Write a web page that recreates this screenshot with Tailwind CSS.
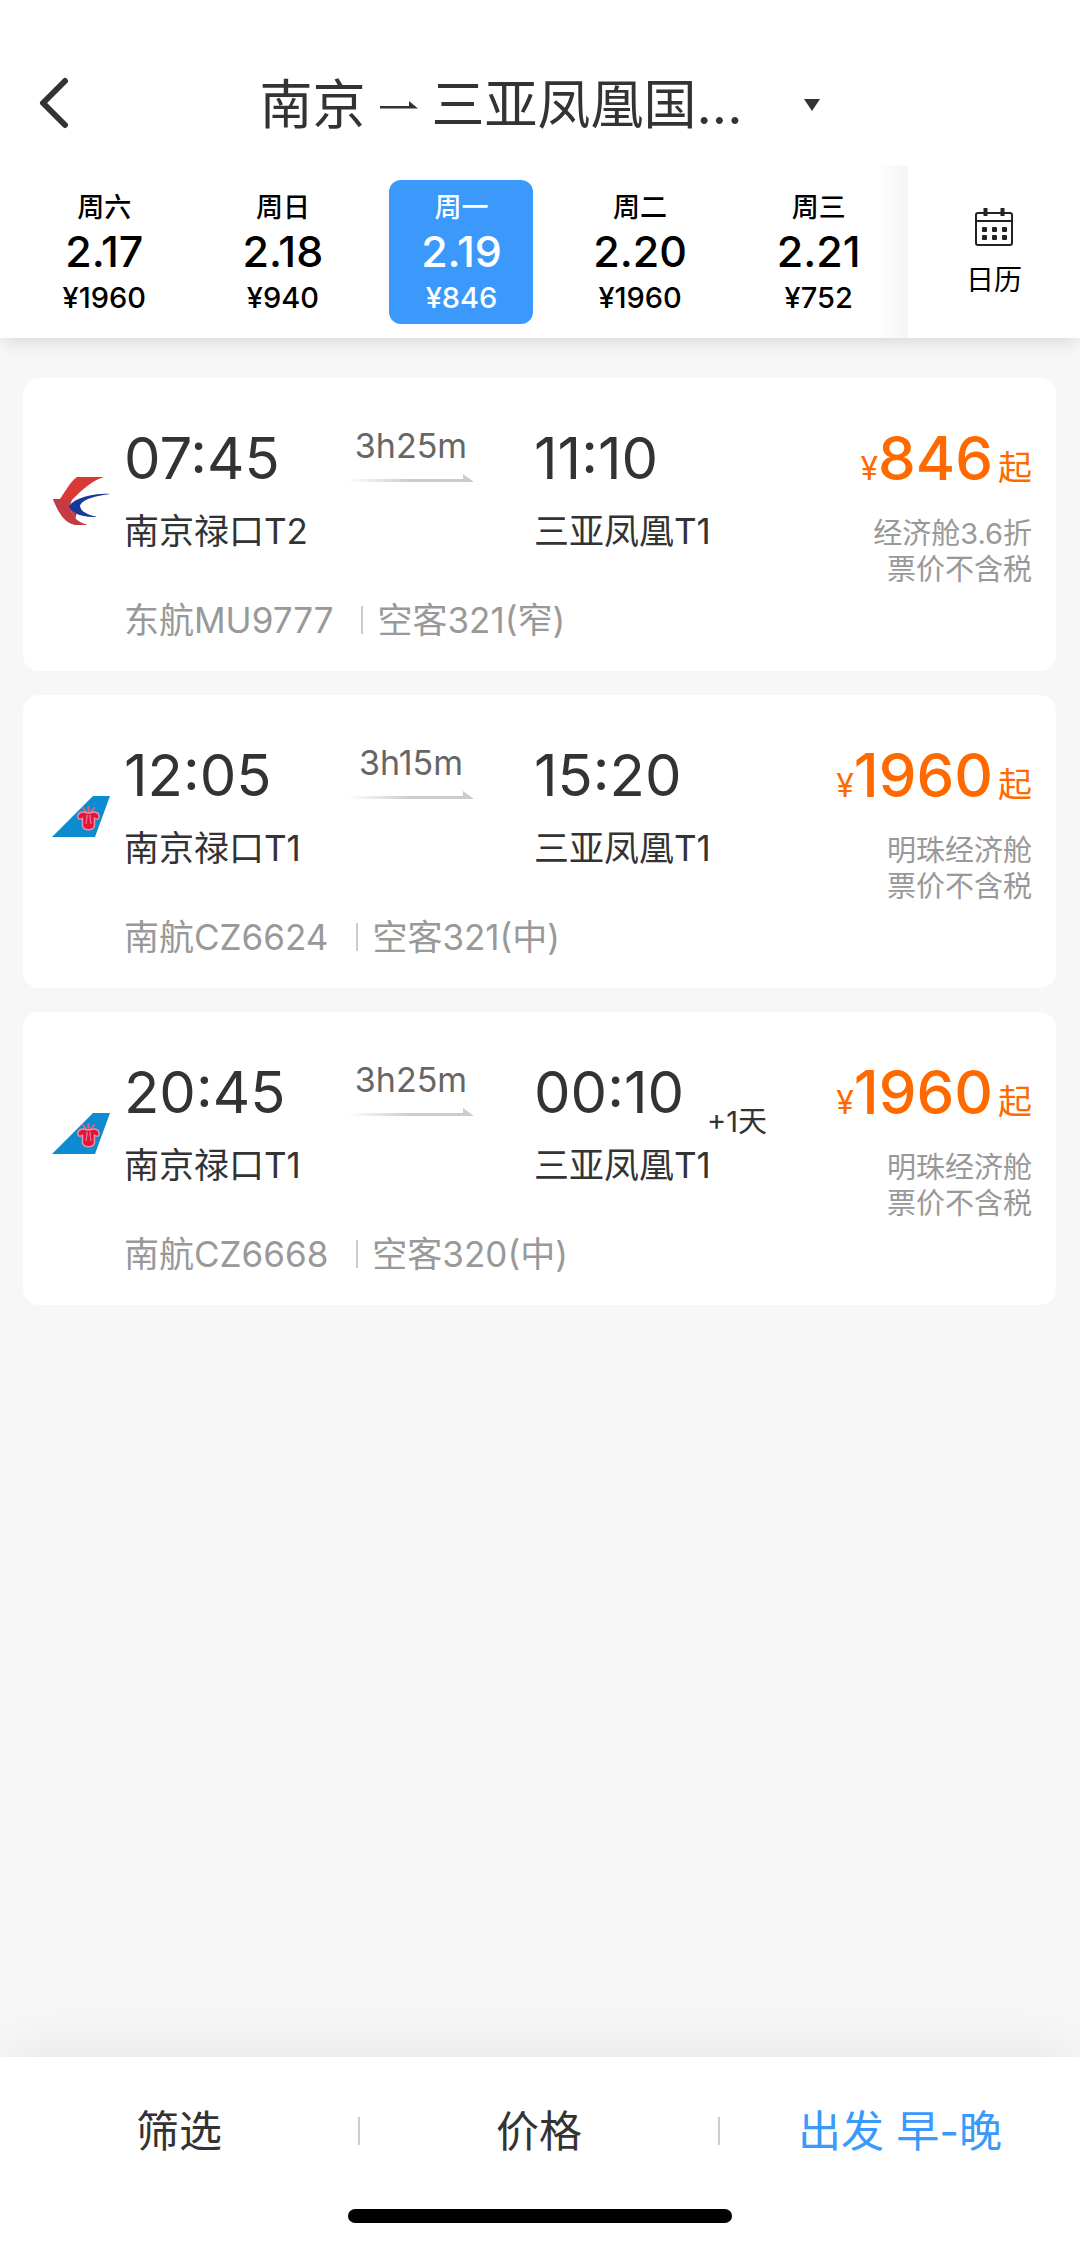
<!DOCTYPE html>
<html lang="zh-CN">
<head>
<meta charset="utf-8">
<meta name="viewport" content="width=device-width, initial-scale=1">
<title>南京 - 三亚 航班</title>
<script src="https://cdn.jsdelivr.net/npm/@tailwindcss/browser@4"></script>
</head>
<body class="bg-[#f7f7f7] font-['Inter','Noto_Sans_CJK_SC',sans-serif] text-[#333]">
<svg class="absolute h-0 w-0" aria-hidden="true">
  <defs>
    <linearGradient id="fade"><stop offset="0" stop-color="#ccc" stop-opacity="0"/><stop offset=".5" stop-color="#ccc"/></linearGradient>
  </defs>
  <symbol id="china-eastern" viewBox="0 0 60 60">
    <path d="M26 7H53C40 11 32 19 21 30L18 37C20 45 24 51 36 55H29C15 56 8 44 2 29H9C14 22 19 12 26 7Z" fill="#d93a35"/>
    <path d="M9 29L20 30 19 36C21 47 26 52 36 55H29C15 56 8 44 2 29Z" fill="#c43b45"/>
    <path d="M18 36L26 30V42L24 50Z" fill="#c43b45"/>
    <path d="M59 24C45 23 25 27 18 36C19 42 30 47 46 47C36 45 29 41 29 36C31 29 45 26 59 24Z" fill="#18399c"/>
    <path d="M46 47C36 45 29 41 29 36C28 40 27 43 24 43C30 46 37 47 46 47Z" fill="#18399c"/>
  </symbol>
  <symbol id="china-southern" viewBox="0 0 60 60">
    <path d="M42 9H59L44 50H1Z" fill="#0d8bd0"/>
    <path d="M32 21L35 25M37.500 20V25M43 21L40 25" fill="none" stroke="#e5607c" stroke-width="2" stroke-linecap="round"/>
    <path d="M27 31C26 25 32 24 36 26H39C43 24 49 25 48 31C47 33 44 32 43.500 31V39C42 44 33 44 31.500 39V31C31 32 28 33 27 31Z" fill="#e2143a" stroke="#ef8fa6" stroke-width="1.500" stroke-linejoin="round"/>
    <path d="M36 28C36 33 35 35 35 37M39 28C39 33 40 35 40 37" fill="none" stroke="#f29bb0" stroke-width="1"/>
  </symbol>
  <symbol id="flight-arrow" viewBox="0 0 128 8">
    <path d="M0 5H116V0L127 8H0Z" fill="url(#fade)"/>
  </symbol>
</svg>

<div class="flex min-h-screen flex-col">
  <header class="relative z-10 bg-white pt-[60px] shadow-[0_6px_18px_-3px_rgba(0,0,0,0.14)]">
    <div class="grid h-[86px] grid-cols-[96px_1fr_96px] items-center">
      <button type="button" aria-label="返回" class="flex h-full items-center pl-[38px]">
        <svg class="h-[52px] w-8" viewBox="0 0 32 52" fill="none" stroke="#333" stroke-width="6" stroke-linecap="round" stroke-linejoin="round"><path d="M27 4L5 26L27 48"/></svg>
      </button>
      <button type="button" class="flex items-center justify-center pt-1 text-[53px] leading-[80px]">
        <span>南京</span>
        <svg class="mx-[14px] h-2 w-[38px]" viewBox="0 0 38 8" aria-hidden="true"><path d="M0 5H29V0L38 7.500H0Z" fill="#333"/></svg>
        <span>三亚凤凰国...</span>
        <svg class="ml-[62px] h-3 w-4" viewBox="0 0 16 12" aria-hidden="true"><path d="M0 0H16L8 12Z" fill="#333"/></svg>
      </button>
    </div>
    <div class="flex pt-[19px] text-black">
      <nav aria-label="日期" class="grid flex-1 grid-cols-5 justify-items-center pt-[15px] pb-[14px] pl-[15px] font-medium">
        <button type="button" class="flex h-36 w-36 flex-col items-center rounded-xl pt-3">
          <span class="text-[27px] leading-8">周六</span><span class="text-[43px] leading-[54px]">2.17</span><span class="text-[29px] leading-10">¥1960</span>
        </button>
        <button type="button" class="flex h-36 w-36 flex-col items-center rounded-xl pt-3">
          <span class="text-[27px] leading-8">周日</span><span class="text-[43px] leading-[54px]">2.18</span><span class="text-[29px] leading-10">¥940</span>
        </button>
        <button type="button" aria-pressed="true" class="flex h-36 w-36 flex-col items-center rounded-xl bg-[#3b99fc] pt-3 text-white">
          <span class="text-[27px] leading-8">周一</span><span class="text-[43px] leading-[54px]">2.19</span><span class="text-[29px] leading-10">¥846</span>
        </button>
        <button type="button" class="flex h-36 w-36 flex-col items-center rounded-xl pt-3">
          <span class="text-[27px] leading-8">周二</span><span class="text-[43px] leading-[54px]">2.20</span><span class="text-[29px] leading-10">¥1960</span>
        </button>
        <button type="button" class="flex h-36 w-36 flex-col items-center rounded-xl pt-3">
          <span class="text-[27px] leading-8">周三</span><span class="text-[43px] leading-[54px]">2.21</span><span class="text-[29px] leading-10">¥752</span>
        </button>
      </nav>
      <div class="-ml-8 w-8 bg-linear-to-r from-black/0 to-black/4"></div>
      <button type="button" class="flex w-[172px] flex-col items-center bg-white pt-[43px]">
        <svg class="h-[38px] w-[38px]" viewBox="0 0 38 38" fill="none" stroke="#222" stroke-width="2" aria-hidden="true">
          <rect x="1" y="5" width="36" height="32" rx="2"/><path d="M1 13H37"/><path d="M10.500 0V8M27.500 0V8" stroke-width="4"/>
          <g fill="#222" stroke="none"><rect x="7" y="19" width="5" height="5" rx="1"/><rect x="17" y="19" width="5" height="5" rx="1"/><rect x="27" y="19" width="5" height="5" rx="1"/><rect x="7" y="27" width="5" height="5" rx="1"/><rect x="17" y="27" width="5" height="5" rx="1"/><rect x="27" y="27" width="5" height="5" rx="1"/></g>
        </svg>
        <span class="mt-[14px] text-[28px] leading-10">日历</span>
      </button>
    </div>
  </header>

  <main class="flex flex-1 flex-col gap-6 pt-10 pr-6 pl-[23px]">
    <article class="flex rounded-2xl bg-white pt-11 pr-6 pb-[27px] pl-7">
      <svg class="mt-12 h-[60px] w-[60px] shrink-0" role="img" aria-label="东航"><use href="#china-eastern"/></svg>
      <div class="ml-[13px] flex-1">
        <div class="flex">
          <div class="w-[218px]"><p class="text-[58px] leading-[72px]">07:45</p><p class="mt-[13px] text-[35px] leading-[48px] whitespace-nowrap">南京禄口T2</p></div>
          <div class="flex w-[138px] flex-col items-center pt-1 text-[#666]"><p class="text-[34px] leading-10">3h25m</p><svg class="mt-2 h-2 w-32" aria-hidden="true"><use href="#flight-arrow"/></svg></div>
          <div class="relative ml-[54px]"><p class="text-[58px] leading-[72px]">11:10</p><p class="mt-[13px] text-[35px] leading-[48px] whitespace-nowrap">三亚凤凰T1</p></div>
        </div>
        <p class="mt-[41px] flex items-center text-[35px] leading-[48px] text-[#999]"><span>东航MU9777</span><span class="mr-[14px] ml-7 h-7 w-[2px] bg-[#ccc]"></span><span>空客321(窄)</span></p>
      </div>
      <div class="text-right">
        <p class="flex items-baseline justify-end text-[#ff6a00]"><span class="text-[32px]">¥</span><span class="text-[60px] leading-[72px] font-medium">846</span><span class="ml-[5px] text-[34px]">起</span></p>
        <p class="mt-[22px] text-[29px] leading-9 text-[#999]">经济舱3.6折<br>票价不含税</p>
      </div>
    </article>

    <article class="flex rounded-2xl bg-white pt-11 pr-6 pb-[27px] pl-7">
      <svg class="mt-12 h-[60px] w-[60px] shrink-0" role="img" aria-label="南航"><use href="#china-southern"/></svg>
      <div class="ml-[13px] flex-1">
        <div class="flex">
          <div class="w-[218px]"><p class="text-[58px] leading-[72px]">12:05</p><p class="mt-[13px] text-[35px] leading-[48px] whitespace-nowrap">南京禄口T1</p></div>
          <div class="flex w-[138px] flex-col items-center pt-1 text-[#666]"><p class="text-[34px] leading-10">3h15m</p><svg class="mt-2 h-2 w-32" aria-hidden="true"><use href="#flight-arrow"/></svg></div>
          <div class="relative ml-[54px]"><p class="text-[58px] leading-[72px]">15:20</p><p class="mt-[13px] text-[35px] leading-[48px] whitespace-nowrap">三亚凤凰T1</p></div>
        </div>
        <p class="mt-[41px] flex items-center text-[35px] leading-[48px] text-[#999]"><span>南航CZ6624</span><span class="mr-[14px] ml-7 h-7 w-[2px] bg-[#ccc]"></span><span>空客321(中)</span></p>
      </div>
      <div class="text-right">
        <p class="flex items-baseline justify-end text-[#ff6a00]"><span class="text-[32px]">¥</span><span class="text-[60px] leading-[72px] font-medium">1960</span><span class="ml-[5px] text-[34px]">起</span></p>
        <p class="mt-[22px] text-[29px] leading-9 text-[#999]">明珠经济舱<br>票价不含税</p>
      </div>
    </article>

    <article class="flex rounded-2xl bg-white pt-11 pr-6 pb-[27px] pl-7">
      <svg class="mt-12 h-[60px] w-[60px] shrink-0" role="img" aria-label="南航"><use href="#china-southern"/></svg>
      <div class="ml-[13px] flex-1">
        <div class="flex">
          <div class="w-[218px]"><p class="text-[58px] leading-[72px]">20:45</p><p class="mt-[13px] text-[35px] leading-[48px] whitespace-nowrap">南京禄口T1</p></div>
          <div class="flex w-[138px] flex-col items-center pt-1 text-[#666]"><p class="text-[34px] leading-10">3h25m</p><svg class="mt-2 h-2 w-32" aria-hidden="true"><use href="#flight-arrow"/></svg></div>
          <div class="relative ml-[54px]"><p class="text-[58px] leading-[72px]">00:10</p><p class="mt-[13px] text-[35px] leading-[48px] whitespace-nowrap">三亚凤凰T1</p><span class="absolute top-[52px] left-[173px] text-[29px] leading-7 whitespace-nowrap">+1天</span></div>
        </div>
        <p class="mt-[41px] flex items-center text-[35px] leading-[48px] text-[#999]"><span>南航CZ6668</span><span class="mr-[14px] ml-7 h-7 w-[2px] bg-[#ccc]"></span><span>空客320(中)</span></p>
      </div>
      <div class="text-right">
        <p class="flex items-baseline justify-end text-[#ff6a00]"><span class="text-[32px]">¥</span><span class="text-[60px] leading-[72px] font-medium">1960</span><span class="ml-[5px] text-[34px]">起</span></p>
        <p class="mt-[22px] text-[29px] leading-9 text-[#999]">明珠经济舱<br>票价不含税</p>
      </div>
    </article>
  </main>

  <footer class="bg-white pb-[23px] shadow-[0_-8px_64px_-8px_rgba(0,0,0,0.09)]">
    <div class="grid h-[148px] grid-cols-3 text-[43px] leading-[60px]">
      <button type="button" class="flex items-center"><span class="flex-1">筛选</span><span class="h-7 w-[2px] bg-[#ccc]"></span></button>
      <button type="button" class="flex items-center"><span class="flex-1">价格</span><span class="h-7 w-[2px] bg-[#ccc]"></span></button>
      <button type="button" class="text-[#3b99fc]">出发 早-晚</button>
    </div>
    <div class="mx-auto mt-1 h-[14px] w-[384px] rounded-full bg-black"></div>
  </footer>
</div>
</body>
</html>
